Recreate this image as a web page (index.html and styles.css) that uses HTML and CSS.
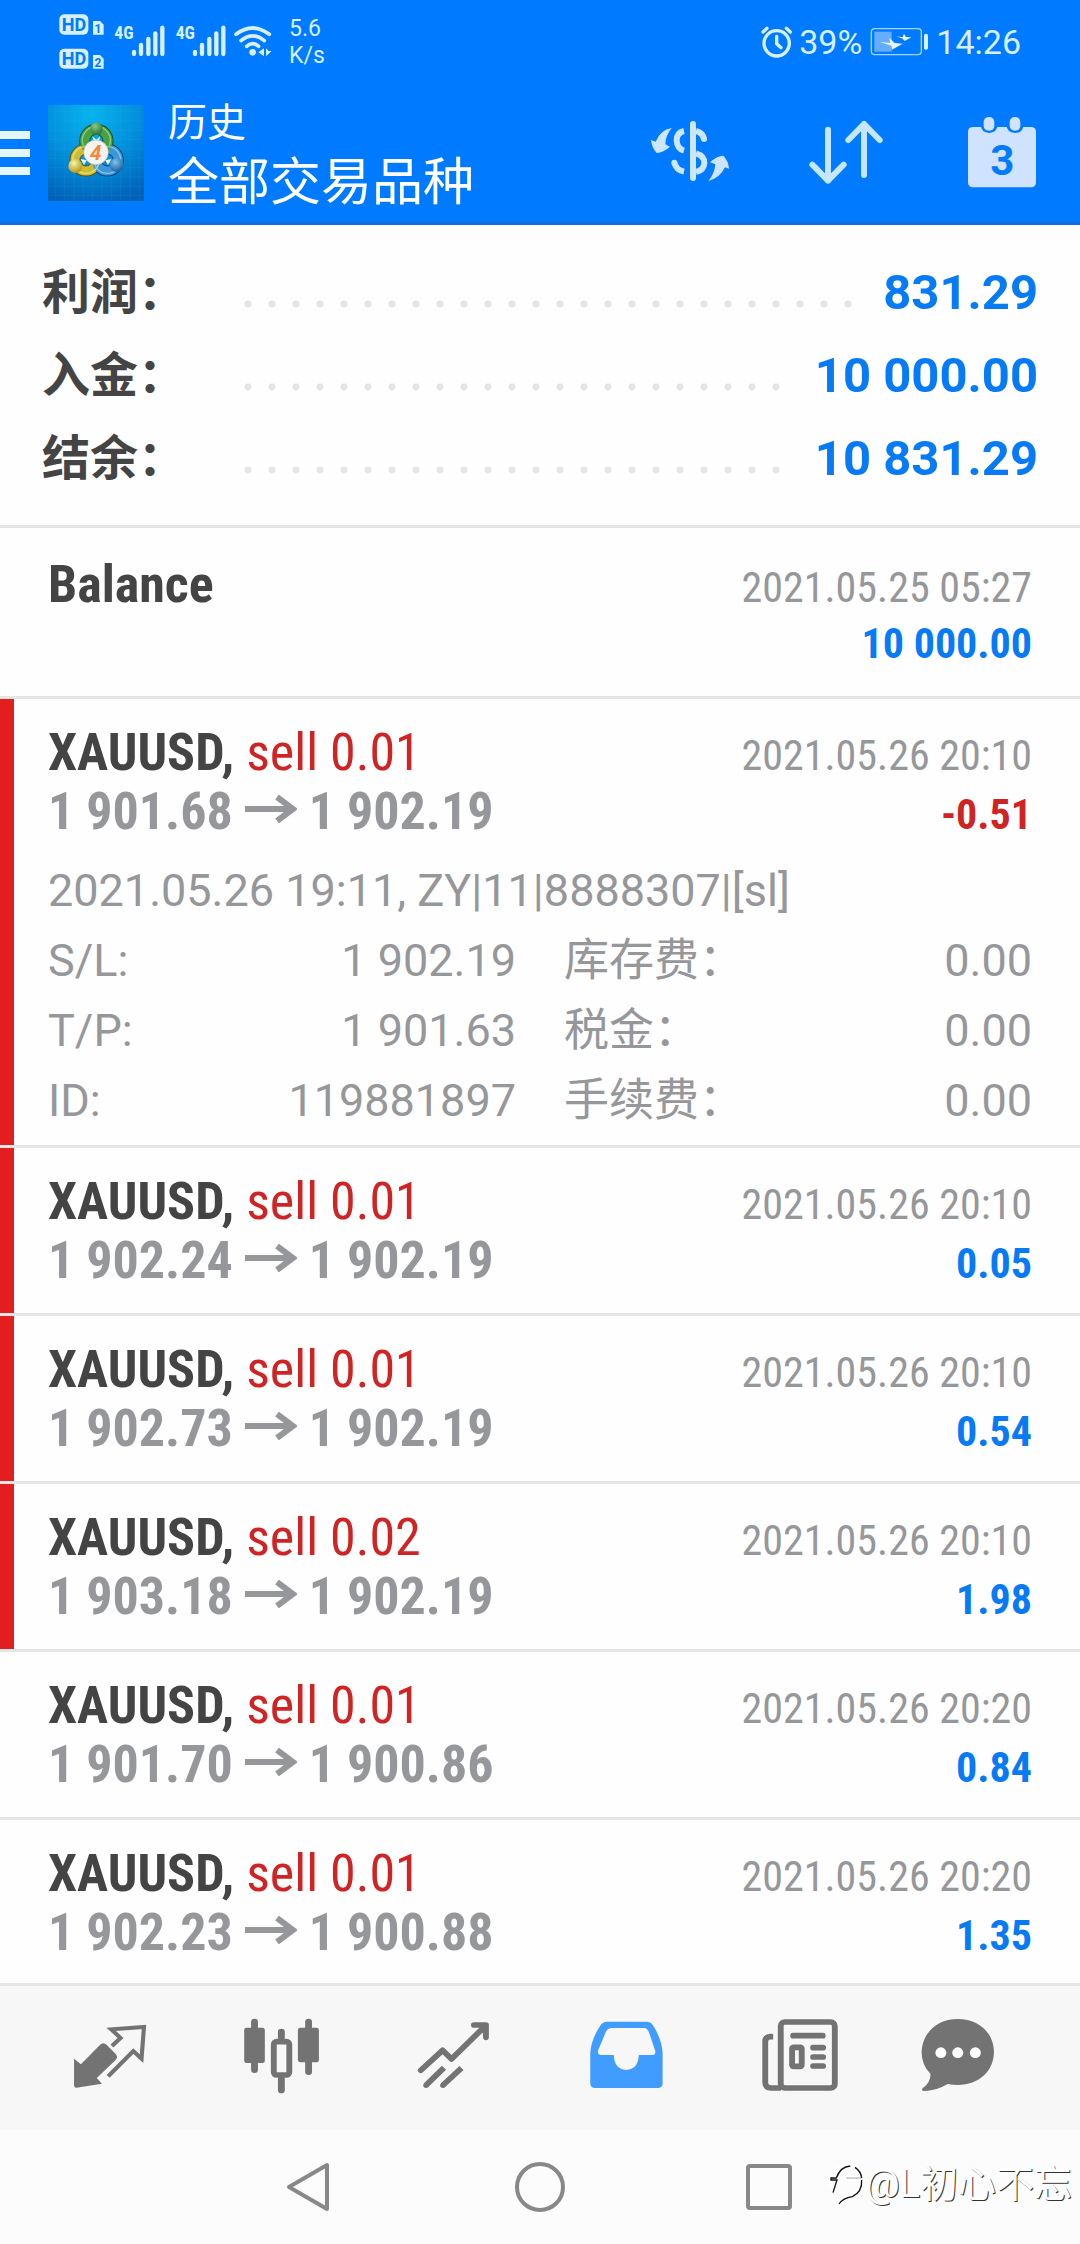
FILE: index.html
```html
<!DOCTYPE html>
<html lang="zh-CN">
<head>
<meta charset="utf-8">
<meta name="viewport" content="width=device-width, initial-scale=1">
<title>历史</title>
<link rel="stylesheet" href="styles.css">
</head>
<body>
<svg width="0" height="0" class="defs" aria-hidden="true">
  <symbol id="arrow" viewBox="0 0 52 28"><path d="M0 14H49M32 2L48 14L32 26" fill="none" stroke="currentColor" stroke-width="6"/></symbol>
</svg>

<div class="top">
  <div class="status">
    <div class="status-left">
      <svg width="216" height="60" viewBox="0 0 648 180" fill="#d6f0ff" aria-hidden="true">
        <g transform="translate(-168,-33)">
          <rect x="178" y="40" width="87" height="61" rx="15"/>
          <rect x="178" y="143" width="87" height="60" rx="15"/>
          <path d="M279 60H300L311 71V101H279Z"/>
          <path d="M279 162H300L311 173V203H279Z"/>
          <g class="badge-text" fill="#007aff">
            <text x="222" y="90" font-size="54" text-anchor="middle">HD</text>
            <text x="222" y="192" font-size="54" text-anchor="middle">HD</text>
            <text x="294" y="97" font-size="36" text-anchor="middle">1</text>
            <text x="294" y="198" font-size="36" text-anchor="middle">2</text>
          </g>
          <g class="net-text">
            <text x="343" y="113" font-size="53">4G</text>
            <text x="527" y="113" font-size="53">4G</text>
          </g>
          <g stroke="#d6f0ff" stroke-width="13" stroke-linecap="round">
            <path d="M402 153V159M423 132V159M445 114V159M466 97V159M487 80V159"/>
            <path d="M585 153V159M606 132V159M628 114V159M649 97V159M670 80V159"/>
          </g>
          <g fill="none" stroke="#d6f0ff" stroke-width="11" stroke-linecap="round">
            <path d="M708 100Q758 62 808 100M723 119Q758 90 793 119M740 136Q758 120 776 136"/>
          </g>
          <circle cx="758" cy="154" r="10"/>
          <path d="M775 154L792 142V166ZM798 142V166L815 150H806Z"/>
        </g>
      </svg>
      <div class="speed"><span>5.6</span><span>K/s</span></div>
    </div>
    <div class="status-right">
      <svg width="32" height="34" viewBox="0 0 96 102" aria-hidden="true">
        <g fill="none" stroke="#d6f0ff" stroke-linecap="round" stroke-width="10">
          <circle cx="47" cy="55" r="38"/><path d="M47 34V56L60 68M6 21L18 10M76 10L88 21"/>
        </g>
      </svg>
      <span>39%</span>
      <svg class="battery" width="60" height="30" viewBox="0 0 180 90" aria-hidden="true">
        <rect x="4" y="5" width="150" height="78" rx="10" fill="none" stroke="#a9d4ff" stroke-width="4"/>
        <rect x="13" y="14" width="52" height="60" fill="#66adff"/>
        <rect x="162" y="20" width="12" height="48" rx="5" fill="#d6f0ff"/>
        <path d="M28 44L60 48L58 32L74 48L98 50L66 68L64 56ZM80 28L98 31L102 20L108 30L124 31L104 42L98 35Z" fill="#e6f5ff"/>
      </svg>
      <time>14:26</time>
    </div>
  </div>

  <header class="bar">
    <button class="menu" aria-label="菜单"><i></i><i></i><i></i></button>
    <svg class="logo" viewBox="0 0 288 288" aria-hidden="true">
      <defs>
        <radialGradient id="sky" cx=".45" cy=".1" r=".95"><stop offset="0" stop-color="#07b4ee"/><stop offset=".5" stop-color="#0390dc"/><stop offset="1" stop-color="#0161b7"/></radialGradient>
        <radialGradient id="gr" cx=".4" cy=".3" r=".8"><stop offset="0" stop-color="#8fc985"/><stop offset="1" stop-color="#176a27"/></radialGradient>
        <radialGradient id="ye" cx=".4" cy=".3" r=".8"><stop offset="0" stop-color="#fdf3a0"/><stop offset="1" stop-color="#a58a0c"/></radialGradient>
        <radialGradient id="bl" cx=".4" cy=".3" r=".8"><stop offset="0" stop-color="#7cc4f0"/><stop offset="1" stop-color="#0c5390"/></radialGradient>
      </defs>
      <rect width="288" height="288" fill="url(#sky)"/>
      <path d="M22 0V288M50 0V288M78 0V288M106 0V288M134 0V288M162 0V288M190 0V288M218 0V288M246 0V288M274 0V288M0 20H288M0 48H288M0 76H288M0 104H288M0 132H288M0 160H288M0 188H288M0 216H288M0 244H288M0 272H288" stroke="#4fc3f5" stroke-opacity=".3" stroke-width="1"/>
      <g fill="none" stroke-width="33">
        <circle cx="114" cy="165" r="33" stroke="#5d5710"/><circle cx="178" cy="165" r="33" stroke="#0b457c"/><circle cx="145" cy="108" r="35" stroke="#0f5520"/>
      </g>
      <g fill="none" stroke-width="27">
        <circle cx="114" cy="165" r="33" stroke="#cdbd34"/><circle cx="178" cy="165" r="33" stroke="#3a98d8"/><circle cx="145" cy="108" r="35" stroke="#4aa145"/>
      </g>
      <g fill="none" stroke-width="4" stroke-opacity=".7">
        <circle cx="114" cy="165" r="40" stroke="#f3ec90"/><circle cx="178" cy="165" r="40" stroke="#9fd4f5"/><path d="M106 122A42 42 0 1 1 184 122" stroke="#a9dc9c"/>
      </g>
      <path d="M133 94L145 104L157 94L152 110H138ZM98 162L116 166L108 180ZM190 162L172 166L180 180Z" fill="#f2f6f2"/>
      <circle cx="145" cy="71" r="19" fill="url(#gr)"/>
      <circle cx="82" cy="183" r="21" fill="url(#ye)"/>
      <circle cx="206" cy="180" r="21" fill="url(#bl)"/>
      <circle cx="144" cy="142" r="37" fill="#f4f3f1" stroke="#b9b9b4" stroke-width="2"/>
      <text class="logo-num" x="143" y="164" text-anchor="middle">4</text>
    </svg>
    <div class="titles"><h1>历史</h1><p>全部交易品种</p></div>
    <div class="actions">
      <button aria-label="货币">
        <svg width="96" height="96" viewBox="0 0 288 288"><g transform="translate(-66,-45)" fill="none" stroke="#cce6ff" stroke-width="18">
          <path d="M219 102V264" stroke-linecap="round"/>
          <path d="M192 123Q170 128 170 151Q171 176 192 182"/>
          <path d="M163 218Q168 240 192 245" stroke-linecap="butt"/><circle cx="163" cy="218" r="9" fill="#cce6ff" stroke="none"/>
          <path d="M228 123Q248 128 252 147"/><circle cx="252" cy="147" r="9" fill="#cce6ff" stroke="none"/>
          <path d="M228 190Q254 198 253 219Q252 240 228 246"/>
          <path fill="#cce6ff" stroke="none" d="M155 114Q120 120 107 155L93 150Q96 175 110 189Q130 188 150 170L136 163Q136 138 155 114ZM265 273Q300 264 315 232L327 236Q325 212 310 197Q290 198 270 217L286 223Q284 250 265 273Z"/>
        </g></svg>
      </button>
      <button aria-label="排序">
        <svg width="96" height="96" viewBox="0 0 288 288"><path transform="translate(-534,-45)" d="M624 119V272M577 224L624 272L671 224M732 255V102M685 150L732 102L779 150" fill="none" stroke="#c6e6ff" stroke-width="18" stroke-linecap="round" stroke-linejoin="round"/></svg>
      </button>
      <button aria-label="日期">
        <svg width="96" height="96" viewBox="0 0 288 288"><g transform="translate(-1002,-45)">
          <rect x="1044" y="111" width="204" height="181" rx="14" fill="#cfe3ff"/>
          <path d="M1082 100V105Q1084 128 1107 129Q1131 128 1133 105V100ZM1159 100V105Q1161 128 1185 129Q1209 128 1211 105V100Z" fill="#007aff"/>
          <rect x="1091" y="81" width="32" height="41" rx="15" fill="#cfe3ff"/><rect x="1169" y="81" width="32" height="41" rx="15" fill="#cfe3ff"/>
          <text class="cal-num" x="1147" y="254" text-anchor="middle">3</text>
        </g></svg>
      </button>
    </div>
  </header>
</div>

<main>
  <dl class="summary">
    <div><dt>利润：</dt><dd>831.29</dd></div>
    <div><dt>入金：</dt><dd>10 000.00</dd></div>
    <div><dt>结余：</dt><dd>10 831.29</dd></div>
  </dl>
  <ul class="deals">
    <li class="first">
      <div class="row"><span class="name">Balance</span><time>2021.05.25 05:27</time><span></span><b class="up">10 000.00</b></div>
    </li>
    <li class="marked">
      <div class="row"><span class="name">XAUUSD, <em>sell 0.01</em></span><time>2021.05.26 20:10</time><span class="price">1 901.68 <svg><use href="#arrow"/></svg> 1 902.19</span><b class="down">-0.51</b></div>
      <div class="details">
        <p>2021.05.26 19:11, ZY|11|8888307|[sl]</p>
        <dl>
          <div><dt>S/L:</dt><dd>1 902.19</dd></div><div><dt>库存费：</dt><dd>0.00</dd></div>
          <div><dt>T/P:</dt><dd>1 901.63</dd></div><div><dt>税金：</dt><dd>0.00</dd></div>
          <div><dt>ID:</dt><dd>119881897</dd></div><div><dt>手续费：</dt><dd>0.00</dd></div>
        </dl>
      </div>
    </li>
    <li class="marked">
      <div class="row"><span class="name">XAUUSD, <em>sell 0.01</em></span><time>2021.05.26 20:10</time><span class="price">1 902.24 <svg><use href="#arrow"/></svg> 1 902.19</span><b class="up">0.05</b></div>
    </li>
    <li class="marked">
      <div class="row"><span class="name">XAUUSD, <em>sell 0.01</em></span><time>2021.05.26 20:10</time><span class="price">1 902.73 <svg><use href="#arrow"/></svg> 1 902.19</span><b class="up">0.54</b></div>
    </li>
    <li class="marked">
      <div class="row"><span class="name">XAUUSD, <em>sell 0.02</em></span><time>2021.05.26 20:10</time><span class="price">1 903.18 <svg><use href="#arrow"/></svg> 1 902.19</span><b class="up">1.98</b></div>
    </li>
    <li>
      <div class="row"><span class="name">XAUUSD, <em>sell 0.01</em></span><time>2021.05.26 20:20</time><span class="price">1 901.70 <svg><use href="#arrow"/></svg> 1 900.86</span><b class="up">0.84</b></div>
    </li>
    <li>
      <div class="row"><span class="name">XAUUSD, <em>sell 0.01</em></span><time>2021.05.26 20:20</time><span class="price">1 902.23 <svg><use href="#arrow"/></svg> 1 900.88</span><b class="up">1.35</b></div>
    </li>
  </ul>
</main>

<nav class="tabs">
  <button aria-label="行情">
    <svg width="120" height="96" viewBox="0 0 120 96"><g transform="translate(-48,-40) scale(.3444,.3333)" fill="#737373">
      <path d="M215 266L235 283L290 225Q300 214 310 225L336 252Q344 262 335 271L281 324L296 341L222 353Q215 354 215 346Z"/>
      <path d="M325 228L350 204L323 178L418 171L411 266L387 243L314 319" fill="none" stroke="#737373" stroke-width="12"/></g></svg>
  </button>
  <button aria-label="图表">
    <svg width="120" height="96" viewBox="0 0 120 96"><g transform="translate(-221,-40) scale(.3444,.3333)" fill="#737373">
      <rect x="729" y="146" width="20" height="163" rx="10"/><rect x="709" y="173" width="60" height="106" rx="7"/>
      <rect x="886" y="146" width="20" height="169" rx="10"/><rect x="865" y="173" width="61" height="104" rx="7"/>
      <rect x="807" y="176" width="20" height="36" rx="10"/><rect x="807" y="318" width="20" height="52" rx="10"/>
      <rect x="795" y="215" width="45" height="100" rx="8" fill="none" stroke="#737373" stroke-width="17"/></g></svg>
  </button>
  <button aria-label="交易">
    <svg width="120" height="96" viewBox="0 0 120 96"><g transform="translate(-394,-40) scale(.3444,.3333)" fill="none" stroke="#737373" stroke-width="17">
      <path d="M1222 301L1285 241L1311 267L1411 166M1376 165H1411V202" stroke-linecap="round" stroke-linejoin="round"/>
      <path d="M1289 293L1237 346M1340 294L1286 346"/><circle cx="1237" cy="346" r="8" fill="#737373" stroke="none"/><circle cx="1286" cy="346" r="8" fill="#737373" stroke="none"/></g></svg>
  </button>
  <button aria-label="历史">
    <svg width="120" height="96" viewBox="0 0 120 96"><g transform="translate(-26,-40) scale(.3444,.3333)" fill="#419cff">
      <path fill-rule="evenodd" d="M192 155H312Q322 156 328 166Q354 208 356 250V341Q355 353 343 354H159Q147 353 146 341V250Q148 208 176 166Q182 156 192 155ZM206 174Q196 175 192 184L169 240Q165 253 176 255H214Q216 298 250 300Q285 298 287 255H326Q338 254 334 241L316 186Q312 175 302 174Z"/></g></svg>
  </button>
  <button aria-label="新闻">
    <svg width="120" height="96" viewBox="0 0 120 96"><g transform="translate(-199,-40) scale(.3444,.3333)" fill="none" stroke="#737373" stroke-width="17">
      <rect x="699" y="156" width="157" height="198" rx="12"/>
      <path d="M677 200H668Q654 201 654 215V338Q655 354 671 354H700"/>
      <path d="M735 197H821M793 233H822M793 261H822M793 288H822" stroke-linecap="round"/>
      <rect x="732" y="232" width="28" height="57" rx="4"/></g></svg>
  </button>
  <button aria-label="消息">
    <svg width="120" height="96" viewBox="0 0 120 96"><g transform="translate(-372,-40) scale(.3444,.3333)">
      <path d="M1213 147C1275 147 1318 190 1318 246C1318 302 1275 345 1213 345Q1198 345 1184 342Q1150 363 1114 363Q1106 361 1111 355Q1134 338 1134 312Q1108 285 1108 246C1110 190 1152 147 1213 147Z" fill="#737373"/>
      <circle cx="1164" cy="248" r="16" fill="#fff"/><circle cx="1213" cy="248" r="16" fill="#fff"/><circle cx="1264" cy="248" r="16" fill="#fff"/></g></svg>
  </button>
</nav>

<div class="system">
  <button aria-label="返回"><svg width="52" height="52" viewBox="0 0 52 52"><path d="M43 4V48L5 26Z"/></svg></button>
  <button aria-label="主页"><svg width="52" height="52" viewBox="0 0 52 52"><circle cx="26" cy="26" r="23"/></svg></button>
  <button aria-label="最近"><svg width="52" height="52" viewBox="0 0 52 52"><rect x="4" y="5" width="42" height="42" rx="2"/></svg></button>
  <div class="mark">
    <svg width="40" height="48" viewBox="0 0 120 144" fill="none">
      <path d="M16 84L26 50Q42 18 68 16Q104 22 108 56Q108 92 82 108Q56 116 44 132M60 56H100M16 62H38" stroke="#fff" stroke-width="14"/>
      <path d="M24 98L36 60H18V54H34Q46 20 76 18M90 22Q108 34 110 54" stroke="#111" stroke-width="4"/>
      <path d="M64 54H112" stroke="#777" stroke-width="2"/>
      <path d="M110 60Q112 96 82 110Q54 114 42 132" stroke="#111" stroke-width="4"/>
    </svg>
    <span>@L初心不忘</span>
  </div>
</div>
</body>
</html>
```
FILE: styles.css
```css
* { box-sizing: border-box; margin: 0; padding: 0; }

body {
  display: flex;
  flex-direction: column;
  height: 100vh;
  overflow: hidden;
  background: #fefefe;
  color: #444;
  font-family: Roboto, "Noto Sans CJK SC", sans-serif;
}

button { border: 0; background: none; font: inherit; }
svg { display: block; }
.defs { position: absolute; }

/* Status bar and title bar */
.top {
  background: #007aff;
  border-bottom: 3px solid #0f6fd6;
  color: #fff;
}
.status {
  display: flex;
  justify-content: space-between;
  align-items: center;
  height: 84px;
  padding: 0 59px 0 56px;
}
.status-left, .status-right { display: flex; align-items: center; }
.status-left { gap: 17px; }
.speed {
  display: flex;
  flex-direction: column;
  color: #d6f0ff;
  font-size: 23px;
  line-height: 27px;
}
.status-right {
  gap: 6px;
  color: #d6f0ff;
  font-size: 34px;
}
.battery { margin-left: 2px; }
.badge-text { font-family: "Roboto", sans-serif; font-weight: 700; }
.net-text { font-family: "Roboto Condensed", sans-serif; font-weight: 700; }

.bar { display: flex; align-items: center; height: 138px; }
.menu {
  display: flex;
  flex-direction: column;
  gap: 10px;
  width: 48px;
}
.menu i { width: 30px; height: 8px; background: #e6f6ff; }
.logo { width: 96px; height: 96px; }
.logo-num { font: italic 700 62px Roboto, sans-serif; fill: #f0893a; }
.titles { flex: 1; padding: 4px 0 0 24px; }
.titles h1 { font-size: 39px; font-weight: 400; line-height: 56px; }
.titles p { font-size: 51px; line-height: 64px; }
.actions { display: flex; }
.actions button { width: 156px; display: flex; justify-content: center; }
.cal-num { font: 700 126px Roboto, sans-serif; fill: #007aff; }

/* Account summary */
main { flex: 1; min-height: 0; overflow: hidden; }
.summary {
  padding: 26px 42px 25px;
  border-bottom: 3px solid #e5e5e5;
}
.summary div { display: flex; font-size: 48px; line-height: 83px; font-weight: 700; }
.summary dt { width: 194px; }
.summary dd { flex: 1; display: flex; color: #077af5; font-size: 49px; }
.summary dd::before {
  content: "";
  flex: 1;
  height: 24px;
  margin: 41px 24px 0 0;
  background: radial-gradient(circle at 12px 12px, #e5e5e5 3px, transparent 4px) 0 0 / 24px 24px;
}

/* Deals */
.deals { list-style: none; }
.deals li { border-top: 3px solid #e5e5e5; position: relative; }
.deals .first { border-color: transparent; }
.marked::before {
  content: "";
  position: absolute;
  inset: 0 auto 0 0;
  width: 14px;
  background: #e21f1e;
}
.row {
  display: grid;
  grid-template-columns: 1fr auto;
  grid-auto-rows: 59px;
  align-items: baseline;
  padding: 24px 48px 23px;
  font-family: "Roboto Condensed", "Noto Sans CJK SC", sans-serif;
  font-size: 52px;
  line-height: 59px;
}
.row time, .row b { font-size: 42px; text-align: right; }
.row time { color: #96979b; }
.name { font-weight: 700; }
.name em { font-style: normal; font-weight: 400; color: #d02324; }
.price { color: #96979b; font-weight: 700; }
.price svg { display: inline-block; width: 52px; height: 28px; vertical-align: 6px; }
.up { color: #077af5; }
.down { color: #d02324; }

.details {
  margin-top: -8px;
  padding: 0 48px 9px;
  color: #96979b;
  font-size: 45px;
  line-height: 70px;
}
.details dl { display: grid; grid-template-columns: 1fr 1fr; column-gap: 48px; }
.details dl div { display: flex; justify-content: space-between; }

/* Tabs */
.tabs {
  display: flex;
  height: 147px;
  align-items: center;
  padding: 0 22px;
  background: #f7f7f7;
  border-top: 3px solid #e5e5e5;
}
.tabs button { flex: 1; display: flex; justify-content: center; }

/* System navigation */
.system {
  position: relative;
  display: flex;
  justify-content: center;
  align-items: center;
  height: 114px;
  background: #fcfcfc;
}
.system button { width: 230px; display: flex; justify-content: center; }
.system button svg { fill: none; stroke: #888; stroke-width: 4; stroke-linejoin: round; }
.mark {
  position: absolute;
  right: 8px;
  bottom: 34px;
  display: flex;
  align-items: center;
  color: #fff;
  font: 38px/52px Roboto, "Noto Sans CJK SC", sans-serif;
  text-shadow: 1px 1px 0 #333;
}
```
